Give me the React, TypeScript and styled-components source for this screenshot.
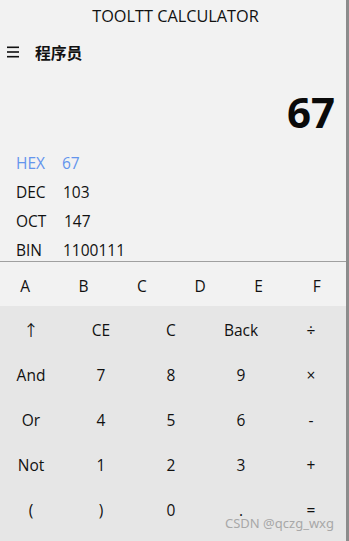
import React from "react";
import styled, { createGlobalStyle } from "styled-components";

const Global = createGlobalStyle`
  html, body { margin: 0; padding: 0; background: #f2f2f2; }
  body { font-family: "Open Sans", "Noto Sans", "Noto Sans CJK SC", sans-serif; color: #111; }
`;

const Window = styled.div`
  position: relative;
  width: 346px;
  height: 541px;
  overflow: hidden;
  background: #f2f2f2;
  border-right: 3px solid #a0a0a0;
  border-image: linear-gradient(to right, #c8c8c8, #8c8c8c) 1;
  display: flex;
  flex-direction: column;
`;

const TitleBar = styled.div`
  height: 32px;
  display: flex;
  align-items: center;
  justify-content: center;
  padding-left: 5px;
  font-size: 16.3px;
  color: #111;
`;

const Header = styled.div`
  height: 40px;
  display: flex;
  align-items: center;
  gap: 16px;
  padding-left: 7px;
`;

const HeaderTitle = styled.span`
  font-family: "Noto Sans CJK SC", sans-serif;
  font-weight: 700;
  font-size: 15.8px;
  color: #111;
`;

const Result = styled.div`
  height: 76px;
  display: flex;
  align-items: center;
  justify-content: flex-end;
  padding-right: 11px;
  padding-top: 2px;
  box-sizing: border-box;
  font-size: 42px;
  font-weight: 700;
  color: #0a0a0a;
`;

const Bases = styled.div`
  height: 113px;
  display: flex;
  flex-direction: column;
`;

const BaseRow = styled.div<{ $active?: boolean }>`
  height: 29px;
  flex: none;
  display: flex;
  align-items: center;
  padding-left: 16px;
  font-size: 15.5px;
  color: ${(p) => (p.$active ? "#6495ed" : "#111")};
`;

const BaseLabel = styled.span<{ $w: number }>`
  width: ${(p) => p.$w}px;
`;

const HexRow = styled.div`
  border-top: 1px solid #a0a0a0;
  height: 44px;
  box-sizing: content-box;
  margin-left: -4px;
  width: 350px;
  display: grid;
  grid-template-columns: repeat(6, 1fr);
`;

const HexKey = styled.div`
  display: flex;
  align-items: center;
  justify-content: center;
  padding-top: 3px;
  font-size: 15.5px;
  color: #111;
`;

const Pad = styled.div`
  flex: 1;
  background: #e6e6e6;
  margin-left: -4px;
  width: 350px;
  display: grid;
  grid-template-columns: repeat(5, 70px);
  grid-auto-rows: 45px;
  align-content: start;
`;

const Key = styled.div`
  display: flex;
  align-items: center;
  justify-content: center;
  padding-top: 2px;
  font-size: 15.5px;
  color: #111;
`;

const Watermark = styled.div`
  position: absolute;
  right: 12px;
  bottom: 9px;
  font-family: "Noto Sans", sans-serif;
  font-size: 13px;
  color: #a8a8a8;
`;

const MenuIcon = () => (
  <svg width="12" height="12" viewBox="0 0 12 12">
    <rect x="0" y="0.5" width="12" height="1.6" fill="#111" />
    <rect x="0" y="5.2" width="12" height="1.6" fill="#111" />
    <rect x="0" y="9.9" width="12" height="1.6" fill="#111" />
  </svg>
);

const bases = [
  { label: "HEX", value: "67", w: 46, active: true },
  { label: "DEC", value: "103", w: 47 },
  { label: "OCT", value: "147", w: 48 },
  { label: "BIN", value: "1100111", w: 47 },
];

const keys = [
  "↑", "CE", "C", "Back", "÷",
  "And", "7", "8", "9", "×",
  "Or", "4", "5", "6", "-",
  "Not", "1", "2", "3", "+",
  "(", ")", "0", ".", "=",
];

export default function App() {
  return (
    <>
      <Global />
      <Window>
        <TitleBar>TOOLTT CALCULATOR</TitleBar>
        <Header>
          <MenuIcon />
          <HeaderTitle>程序员</HeaderTitle>
        </Header>
        <Result>67</Result>
        <Bases>
          {bases.map((b) => (
            <BaseRow key={b.label} $active={b.active}>
              <BaseLabel $w={b.w}>{b.label}</BaseLabel>
              <span>{b.value}</span>
            </BaseRow>
          ))}
        </Bases>
        <HexRow>
          {["A", "B", "C", "D", "E", "F"].map((k) => (
            <HexKey key={k}>{k}</HexKey>
          ))}
        </HexRow>
        <Pad>
          {keys.map((k, i) => (
            <Key key={i}>{k}</Key>
          ))}
        </Pad>
        <Watermark>CSDN @qczg_wxg</Watermark>
      </Window>
    </>
  );
}
